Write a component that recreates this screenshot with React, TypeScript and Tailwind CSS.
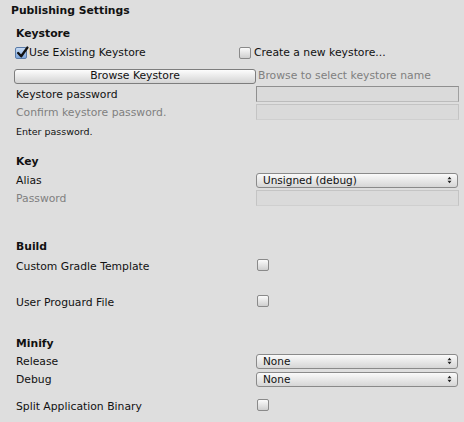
import React from "react";

const FONT = { fontFamily: '"DejaVu Sans", "Liberation Sans", sans-serif' };

function CheckBox({ checked = false }: { checked?: boolean }) {
  return (
    <span
      className={`relative inline-block w-[12px] h-[12px] shrink-0 rounded-[2px] border ${
        checked
          ? "border-[#5a7ba8] bg-gradient-to-b from-[#c6daf3] to-[#7ea6dc]"
          : "border-[#8a8a8a] bg-gradient-to-b from-[#fbfbfb] to-[#cfcfcf]"
      }`}
    >
      {checked && (
        <svg viewBox="0 0 12 12" className="absolute left-[0px] top-[-2px] w-[13px] h-[13px]">
          <path d="M2 6.5 L4.8 9.5 L10.5 1.5" fill="none" stroke="#111" strokeWidth="2.2" strokeLinecap="round" strokeLinejoin="round" />
        </svg>
      )}
    </span>
  );
}

function Field({ active = false }: { active?: boolean }) {
  return (
    <div
      className={`w-[203px] h-[16px] bg-[#dadada] border ${
        active ? "border-[#8f8f8f] border-b-[#bcbcbc] border-r-[#a0a0a0]" : "border-[#c4c4c4] border-b-[#cfcfcf]"
      }`}
    />
  );
}

function Popup({ value }: { value: string }) {
  return (
    <div className="w-[202px] h-[15px] flex items-center justify-between pl-[6px] pr-[5px] rounded-[3px] border border-[#8a8a8a] bg-gradient-to-b from-[#fafafa] to-[#d6d6d6] text-[10.5px] text-[#111] leading-none">
      <span className="pt-[1px]">{value}</span>
      <svg viewBox="0 0 6 10" className="w-[5px] h-[8px]">
        <path d="M0.5 4 L3 1 L5.5 4 Z M0.5 6 L3 9 L5.5 6 Z" fill="#222" />
      </svg>
    </div>
  );
}

function Row({ mt, label, muted = false, children }: { mt: string; label: string; muted?: boolean; children?: React.ReactNode }) {
  return (
    <div className={`flex items-center h-[16px] ${mt}`}>
      <span className={`w-[256px] shrink-0 pl-[16px] pt-[2px] ${muted ? "text-[#808080]" : "text-[#111]"}`}>{label}</span>
      {children}
    </div>
  );
}

function Heading({ mt, children }: { mt: string; children: React.ReactNode }) {
  return (
    <div className={`h-[16px] flex items-center pl-[16px] font-bold ${mt}`}>
      <span className="pt-[2px]">{children}</span>
    </div>
  );
}

export default function App() {
  return (
    <div className="w-[464px] h-[422px] bg-[#dedede] text-[10.8px] text-[#111] leading-none overflow-hidden flex flex-col" style={FONT}>
      <div className="h-[16px] mt-[2px] flex items-center pl-[11px] font-bold">
        <span className="pt-[2px]">Publishing Settings</span>
      </div>

      <Heading mt="mt-[7px]">Keystore</Heading>

      <div className="flex items-center h-[16px] mt-[4px]">
        <label className="w-[239px] shrink-0 pl-[15px] flex items-center gap-[2px]">
          <CheckBox checked />
          <span className="pt-[1px]">Use Existing Keystore</span>
        </label>
        <label className="flex items-center gap-[3px]">
          <CheckBox />
          <span className="pt-[1px]">Create a new keystore...</span>
        </label>
      </div>

      <div className="flex items-center h-[16px] mt-[7px]">
        <button className="ml-[14px] w-[242px] shrink-0 h-[15px] rounded-[3px] border border-[#7d7d7d] bg-gradient-to-b from-[#fdfdfd] to-[#d4d4d4] text-[10.8px] leading-none text-[#111]">
          Browse Keystore
        </button>
        <span className="ml-[2px] pt-[1px] text-[#808080]">Browse to select keystore name</span>
      </div>

      <Row mt="mt-[2px]" label="Keystore password">
        <Field active />
      </Row>
      <Row mt="mt-[2px]" label="Confirm keystore password." muted>
        <Field />
      </Row>

      <div className="h-[16px] mt-[3px] flex items-center pl-[16px] text-[9.5px]">
        <span className="pt-[2px]">Enter password.</span>
      </div>

      <Heading mt="mt-[14px]">Key</Heading>
      <Row mt="mt-[3px]" label="Alias">
        <Popup value="Unsigned (debug)" />
      </Row>
      <Row mt="mt-[2px]" label="Password" muted>
        <Field />
      </Row>

      <Heading mt="mt-[32px]">Build</Heading>
      <Row mt="mt-[4px]" label="Custom Gradle Template">
        <span className="ml-[1px]">
          <CheckBox />
        </span>
      </Row>
      <Row mt="mt-[20px]" label="User Proguard File">
        <span className="ml-[1px]">
          <CheckBox />
        </span>
      </Row>

      <Heading mt="mt-[25px]">Minify</Heading>
      <Row mt="mt-[2px]" label="Release">
        <Popup value="None" />
      </Row>
      <Row mt="mt-[2px]" label="Debug">
        <Popup value="None" />
      </Row>
      <Row mt="mt-[11px]" label="Split Application Binary">
        <span className="ml-[1px]">
          <CheckBox />
        </span>
      </Row>
    </div>
  );
}
